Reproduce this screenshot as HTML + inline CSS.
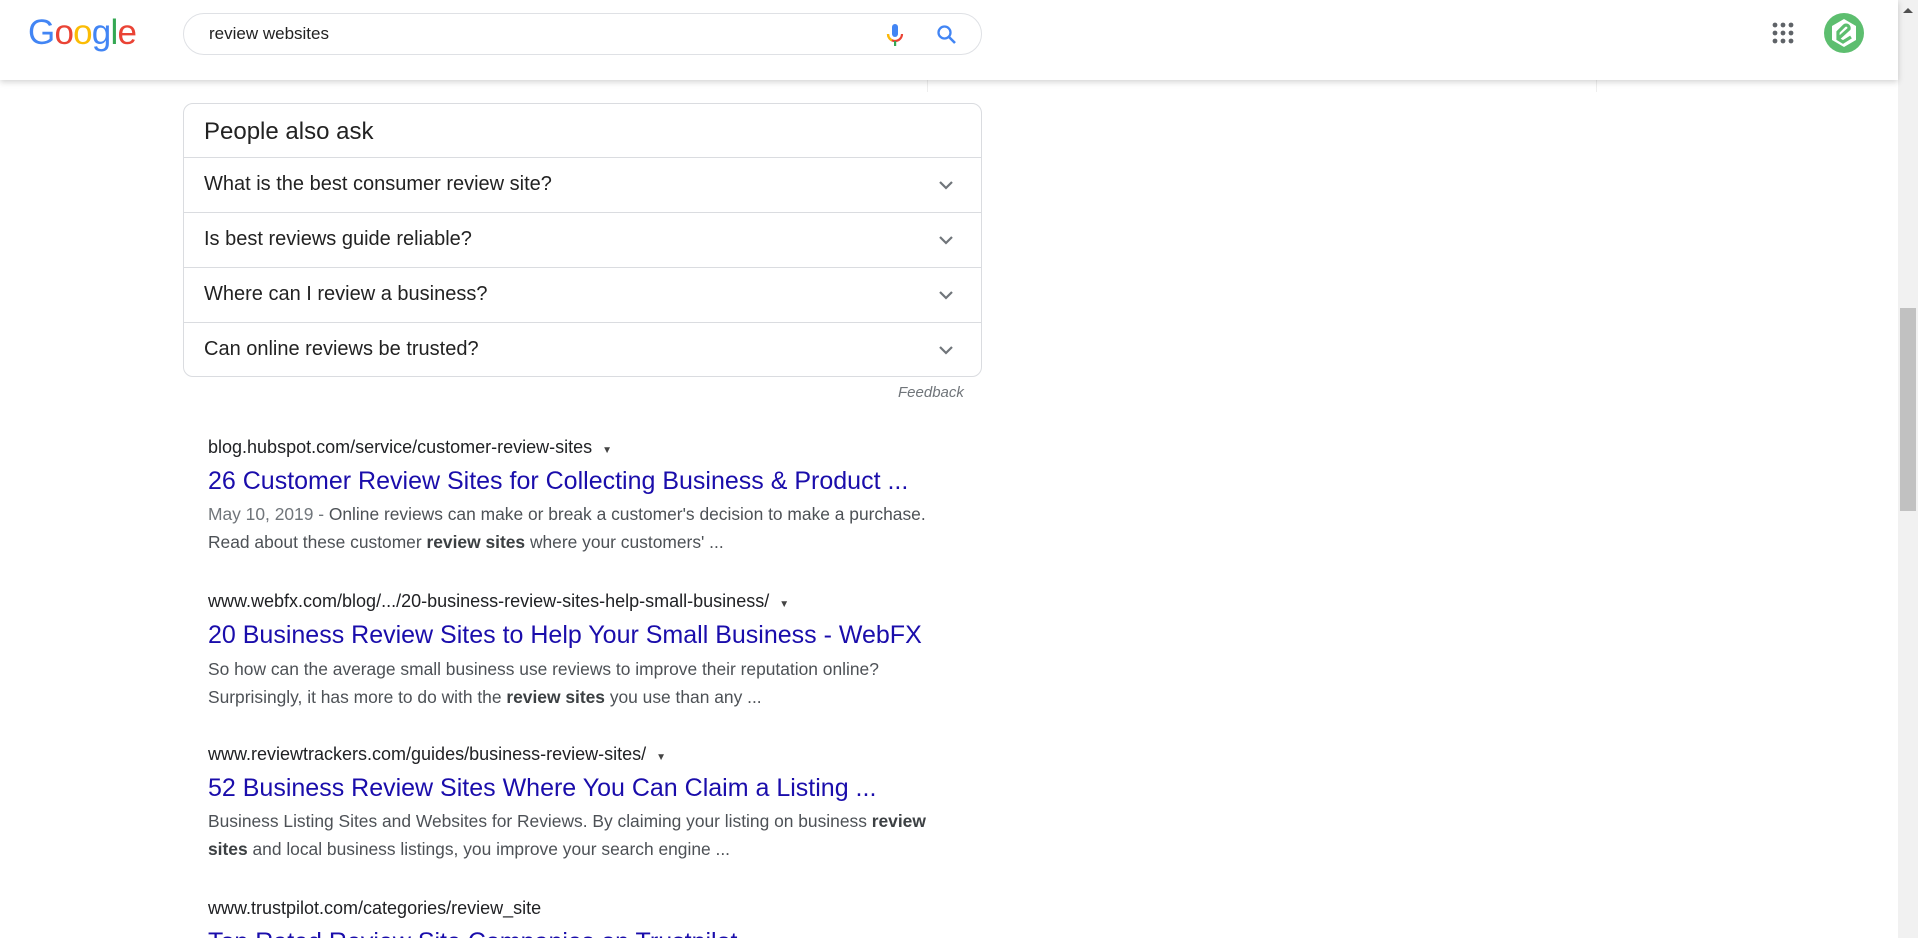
<!DOCTYPE html>
<html><head><meta charset="utf-8"><style>
*{margin:0;padding:0;box-sizing:border-box}
html,body{width:1918px;height:938px;overflow:hidden}
body{background:#fff;font-family:"Liberation Sans",Arial,sans-serif;position:relative;color:#222}
.a{position:absolute;white-space:nowrap}
#hdr{position:absolute;left:0;top:0;width:1898px;height:80px;background:#fff;box-shadow:0 2px 6px rgba(0,0,0,.18);z-index:2}
#sb{position:absolute;left:1898px;top:0;width:20px;height:938px;background:#f1f1f1}
#th{position:absolute;left:1900px;top:308px;width:16px;height:203px;background:#c1c1c1}
.logo{left:28px;top:13px;font-size:35px;letter-spacing:-0.8px;font-family:"Liberation Sans",sans-serif}
.search{left:183px;top:13px;width:799px;height:42px;border:1px solid #dfe1e5;border-radius:21px}
.paa{left:183px;top:103px;width:799px;height:274px;border:1px solid #dadce0;border-radius:10px}
.div{position:absolute;left:0;width:797px;height:1px;background:#dadce0}
.q{font-size:20px;color:#222;left:20px}
.chev{position:absolute;left:754px}
.url{font-size:18px;color:#202124;left:208px}
.url span{font-size:10px;margin-left:10px;color:#444}
.t{font-size:25px;color:#1a0dab;left:208px}
.s{font-size:17.4px;color:#4d5156;left:208px;line-height:28px}
.s b{color:#3c4043}
</style></head><body>
<div id="hdr">
<div class="a logo"><span style="color:#4285f4">G</span><span style="color:#ea4335">o</span><span style="color:#fbbc05">o</span><span style="color:#4285f4">g</span><span style="color:#34a853">l</span><span style="color:#ea4335">e</span></div>
<div class="a search">
<div class="a" style="left:25px;top:10px;font-size:17px;color:#222">review websites</div>
<svg class="a" style="left:699px;top:8px" width="24" height="26" viewBox="0 0 24 26"><rect x="9" y="2" width="6" height="13" rx="3" fill="#4285f4"/><path d="M5 12a7 7 0 0 0 14 0" stroke="#ea4335" stroke-width="2.2" fill="none"/><path d="M5 12a7 7 0 0 0 4 6.3" stroke="#fbbc05" stroke-width="2.2" fill="none"/><rect x="11" y="19" width="2.2" height="5" fill="#34a853"/></svg>
<svg class="a" style="left:751px;top:9px" width="24" height="24" viewBox="0 0 24 24"><circle cx="9.5" cy="9.5" r="6" stroke="#4285f4" stroke-width="2.3" fill="none"/><path d="M14 14l6 6" stroke="#4285f4" stroke-width="2.6"/></svg>
</div>
<svg class="a" style="left:1772px;top:22px" width="22" height="22" viewBox="0 0 22 22" fill="#5f6368"><circle cx="3" cy="3" r="2.4"/><circle cx="11" cy="3" r="2.4"/><circle cx="19" cy="3" r="2.4"/><circle cx="3" cy="11" r="2.4"/><circle cx="11" cy="11" r="2.4"/><circle cx="19" cy="11" r="2.4"/><circle cx="3" cy="19" r="2.4"/><circle cx="11" cy="19" r="2.4"/><circle cx="19" cy="19" r="2.4"/></svg>
<svg class="a" style="left:1823px;top:12px" width="42" height="42" viewBox="0 0 42 42"><circle cx="21" cy="21" r="20" fill="#5dbe6f"/><path d="M21 7l12 7v14l-12 7-12-7V14z" fill="#fff"/><path d="M16 26l10-9a3 3 0 0 0-5-3l-6 6v7l5 3 8-5" stroke="#5dbe6f" stroke-width="3.2" fill="none"/></svg>
</div>
<div class="a" style="left:927px;top:80px;width:1px;height:12px;background:#eee"></div>
<div class="a" style="left:1596px;top:80px;width:1px;height:12px;background:#eee"></div>
<div id="sb"></div><div id="th"></div>
<svg class="a" style="left:1902px;top:6px" width="12" height="8"><path d="M1 7L6 2l5 5z" fill="#505050"/></svg>

<div class="a paa">
<div class="a" style="left:20px;top:14px;font-size:24px;color:#222">People also ask</div>
<div class="div" style="top:53px"></div>
<div class="div" style="top:108px"></div>
<div class="div" style="top:163px"></div>
<div class="div" style="top:218px"></div>
<div class="a q" style="top:69px">What is the best consumer review site?</div>
<div class="a q" style="top:124px">Is best reviews guide reliable?</div>
<div class="a q" style="top:179px">Where can I review a business?</div>
<div class="a q" style="top:234px">Can online reviews be trusted?</div>
<svg class="chev" style="top:75px" width="16" height="12"><path d="M2 3l6 6 6-6" stroke="#70757a" stroke-width="2.2" fill="none"/></svg>
<svg class="chev" style="top:130px" width="16" height="12"><path d="M2 3l6 6 6-6" stroke="#70757a" stroke-width="2.2" fill="none"/></svg>
<svg class="chev" style="top:185px" width="16" height="12"><path d="M2 3l6 6 6-6" stroke="#70757a" stroke-width="2.2" fill="none"/></svg>
<svg class="chev" style="top:240px" width="16" height="12"><path d="M2 3l6 6 6-6" stroke="#70757a" stroke-width="2.2" fill="none"/></svg>
</div>
<div class="a" style="left:898px;top:384px;font-size:15px;font-style:italic;color:#70757a">Feedback</div>

<div class="a url" style="top:437px">blog.hubspot.com/service/customer-review-sites<span>▼</span></div>
<div class="a t" style="top:467px">26 Customer Review Sites for Collecting Business &amp; Product ...</div>
<div class="a s" style="top:500px"><span style="color:#70757a">May 10, 2019 - </span>Online reviews can make or break a customer's decision to make a purchase.<br>Read about these customer <b>review sites</b> where your customers' ...</div>

<div class="a url" style="top:591px">www.webfx.com/blog/.../20-business-review-sites-help-small-business/<span>▼</span></div>
<div class="a t" style="top:621px">20 Business Review Sites to Help Your Small Business - WebFX</div>
<div class="a s" style="top:655px">So how can the average small business use reviews to improve their reputation online?<br>Surprisingly, it has more to do with the <b>review sites</b> you use than any ...</div>

<div class="a url" style="top:744px">www.reviewtrackers.com/guides/business-review-sites/<span>▼</span></div>
<div class="a t" style="top:774px">52 Business Review Sites Where You Can Claim a Listing ...</div>
<div class="a s" style="top:807px">Business Listing Sites and Websites for Reviews. By claiming your listing on business <b>review</b><br><b>sites</b> and local business listings, you improve your search engine ...</div>

<div class="a url" style="top:898px">www.trustpilot.com/categories/review_site</div>
<div class="a t" style="top:928px">Top Rated Review Site Companies on Trustpilot</div>
</body></html>
